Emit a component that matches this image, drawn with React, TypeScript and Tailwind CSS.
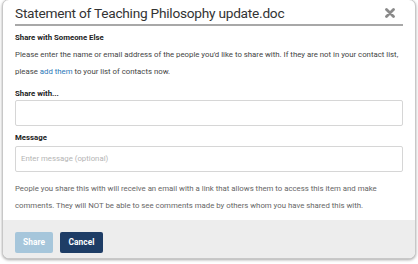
import React from "react";

const App = () => {
  return (
    <div className="w-[418px] h-[264px] bg-white px-[2px] font-['Roboto',sans-serif]">
      <div className="w-[414px] h-[260px] -mt-[1px] rounded-[7px] border border-[#c8c8c8] bg-white shadow-[0_1px_3px_rgba(0,0,0,0.35)] overflow-hidden flex flex-col">
        {/* Header */}
        <div className="px-[12px] pt-[3px]">
          <div className="flex items-center justify-between border-b-2 border-[#a8a8a8] pb-[1px]">
            <h1 className="text-[13.7px] tracking-[-0.25px] leading-[20px] text-[#333]">
              Statement of Teaching Philosophy update.doc
            </h1>
            <svg viewBox="0 0 10 10" className="w-[10px] h-[10px] mr-[8px]">
              <path d="M1.5 1.5 L8.5 8.5 M8.5 1.5 L1.5 8.5" stroke="#8a8a8a" strokeWidth="2.8" strokeLinecap="round" />
            </svg>
          </div>
        </div>

        {/* Body */}
        <div className="px-[12px] pt-[7px] text-[7.8px] text-[#444] flex-1">
          <h2 className="font-bold text-[#222] leading-[10px]">Share with Someone Else</h2>
          <p className="mt-[3px] leading-[17px]">
            Please enter the name or email address of the people you'd like to share with. If they are not in your contact list,{" "}
            please <a className="text-[#2a78b8]">add them</a> to your list of contacts now.
          </p>
          <label className="block mt-[9px] font-bold text-[#222] leading-[10px]">Share with...</label>
          <div className="mt-[1px] h-[26px] border border-[#d6d6d6] rounded-[2px]"></div>
          <label className="block mt-[7px] font-bold text-[#222] leading-[10px]">Message</label>
          <div className="mt-[3px] h-[26px] border border-[#d6d6d6] rounded-[2px] flex items-center px-[5px] text-[#b5b5b5]">
            Enter message (optional)
          </div>
          <p className="mt-[8px] leading-[17px] text-[#666]">
            People you share this with will receive an email with a link that allows them to access this item and make
            comments. They will NOT be able to see comments made by others whom you have shared this with.
          </p>
        </div>

        {/* Footer */}
        <div className="h-[38px] bg-[#ededed] px-[12px] pt-[12px] flex items-start gap-[7px]">
          <button className="h-[21px] w-[38px] rounded-[2px] bg-[#a6c6db] text-white text-[8.4px] font-bold">Share</button>
          <button className="h-[21px] w-[43px] rounded-[2px] bg-[#1e3d66] text-white text-[8.4px] font-bold">Cancel</button>
        </div>
      </div>
    </div>
  );
};

export default App;
